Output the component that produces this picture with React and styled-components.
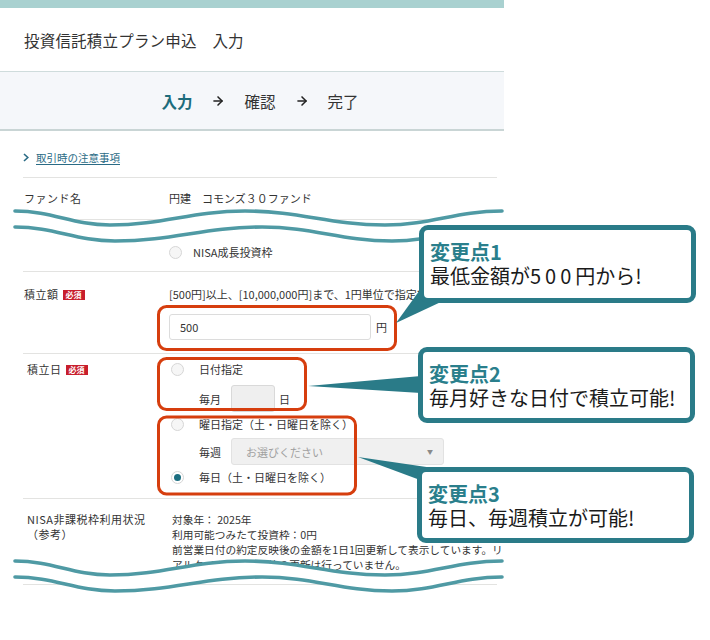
import React from "react";
import styled, { createGlobalStyle } from "styled-components";
import { ArrowRight } from "lucide-react";

const GlobalStyle = createGlobalStyle`
  * { box-sizing: border-box; }
  body { margin: 0; background: #fff; }
`;

const TEAL = "#2a7b88";
const RED = "#d63e0e";
const WAVE = "#4f9aa4";

// wave break shapes (page coordinates)
const XA = [15, 110, 245, 385, 502];
const XB = [15, 115, 262, 392, 502];
const pts = (xs, y) => xs.map((x, i) => [x, y + (i % 2 ? 14 : 0)]);
const segs = (p) => {
    let d = "";
    for (let i = 1; i < p.length; ++i) {
        const [x0, y0] = p[i - 1];
        const [x1, y1] = p[i];
        const k = (x1 - x0) * 0.4;
        d += ` C${x0 + k},${y0} ${x1 - k},${y1} ${x1},${y1}`;
    }
    return d;
};
const line = (p) => `M${p[0][0]},${p[0][1]}` + segs(p);
const band = (a, b) => {
    const rb = [...b].reverse();
    return line(a) + ` L${rb[0][0]},${rb[0][1]}` + segs(rb) + " Z";
};

const WaveBreak = ({ y }) => {
    const a = pts(XA, y);
    const b = pts(XB, y + 16);
    return (
        <g>
            <path d={band(a, b)} fill="#fff" />
            <path d={line(a)} fill="none" stroke={WAVE} strokeWidth="3.6" strokeLinecap="round" />
            <path d={line(b)} fill="none" stroke={WAVE} strokeWidth="3.6" strokeLinecap="round" />
        </g>
    );
};

const Radio = ({ checked, compact, children }) => (
    <RadioOption $compact={compact}>
        <RadioCircle $checked={checked} />
        <span>{children}</span>
    </RadioOption>
);

const App = () => {
    return (
        <>
            <GlobalStyle />
            <Canvas>
                <Page>
                    <TopStrip />
                    <Header>投資信託積立プラン申込　入力</Header>
                    <Steps>
                        <Step $active>入力</Step>
                        <ArrowRight size={14} strokeWidth={2.6} color="#222" />
                        <Step>確認</Step>
                        <ArrowRight size={14} strokeWidth={2.6} color="#222" />
                        <Step>完了</Step>
                    </Steps>
                    <Content>
                        <LinkRow>
                            <svg width="6" height="9" viewBox="0 0 6 9">
                                <polyline points="1,1 4.8,4.5 1,8" fill="none" stroke="#2a6b85" strokeWidth="1.6" />
                            </svg>
                            <Link>取引時の注意事項</Link>
                        </LinkRow>

                        <Row $pad="13px 0 14px">
                            <Label>ファンド名</Label>
                            <Value>円建　コモンズ３０ファンド</Value>
                        </Row>

                        <Row $pad="22px 0 9px">
                            <Label $lh={20} />
                            <Value>
                                <RadioLine $h={20}><Radio compact>NISA成長投資枠</Radio></RadioLine>
                            </Value>
                        </Row>

                        <Row $pad="15px 0 13px">
                            <Label>積立額<Badge>必須</Badge></Label>
                            <Value>
                                <Helper>[500円]以上、[10,000,000円]まで、1円単位で指定できます。</Helper>
                                <InputLine>
                                    <TextInput>500</TextInput>
                                    <Unit>円</Unit>
                                </InputLine>
                            </Value>
                        </Row>

                        <Row $pad="8px 0 14px">
                            <Label $indent={4}>積立日<Badge>必須</Badge></Label>
                            <Value>
                                <RadioLine><Radio>日付指定</Radio></RadioLine>
                                <SubRow $mt={9}>
                                    <SubLabel>毎月</SubLabel>
                                    <DayBox />
                                    <Unit $ml={4}>日</Unit>
                                </SubRow>
                                <RadioLine $mt={5}><Radio>曜日指定（土・日曜日を除く）</Radio></RadioLine>
                                <SubRow $mt={7}>
                                    <SubLabel>毎週</SubLabel>
                                    <Select>
                                        <span>お選びください</span>
                                        <Caret>▼</Caret>
                                    </Select>
                                </SubRow>
                                <RadioLine $mt={5}><Radio checked>毎日（土・日曜日を除く）</Radio></RadioLine>
                            </Value>
                        </Row>

                        <Row $pad="13px 0 12px">
                            <Label $indent={4} $lh={15}>NISA非課税枠利用状況<br />（参考）</Label>
                            <Notes>
                                対象年： 2025年<br />
                                利用可能つみたて投資枠：0円<br />
                                前営業日付の約定反映後の金額を1日1回更新して表示しています。リ<br />
                                アルタイムで非課税枠の更新は行っていません。
                            </Notes>
                        </Row>

                        <Row $pad="0 0 40px" />
                    </Content>
                </Page>

                <Overlay viewBox="0 0 710 640">
                    <WaveBreak y={211} />
                    <WaveBreak y={561} />
                    <rect x="158.5" y="306.5" width="237" height="43" rx="8" fill="none" stroke={RED} strokeWidth="3" />
                    <rect x="158.5" y="358.5" width="147" height="51" rx="8" fill="none" stroke={RED} strokeWidth="3" />
                    <rect x="158.5" y="417" width="197" height="77" rx="8" fill="none" stroke={RED} strokeWidth="3" />
                    <polygon points="396,323 422,287 443,301" fill={TEAL} />
                    <polygon points="308,386 421,376 421,393" fill={TEAL} />
                    <polygon points="358,457 447,470 420,480" fill={TEAL} />
                </Overlay>

                <Callout $x={419} $y={225} $h={78}>
                    <CalloutTitle>変更点1</CalloutTitle>
                    <CalloutText>最低金額が<Wide>500</Wide>円から!</CalloutText>
                </Callout>
                <Callout $x={418} $y={347} $h={76}>
                    <CalloutTitle>変更点2</CalloutTitle>
                    <CalloutText>毎月好きな日付で積立可能!</CalloutText>
                </Callout>
                <Callout $x={417} $y={467} $h={76}>
                    <CalloutTitle>変更点3</CalloutTitle>
                    <CalloutText>毎日、毎週積立が可能!</CalloutText>
                </Callout>
            </Canvas>
        </>
    );
};

const Canvas = styled.div`
    position: relative;
    width: 710px;
    height: 640px;
    overflow: hidden;
    background: #fff;
    font-family: "Noto Sans CJK JP", "Noto Sans", sans-serif;
    color: #333;
`
const Page = styled.div`
    width: 504px;
    overflow: hidden;
`
const TopStrip = styled.div`
    height: 8px;
    background: #a9d1d0;
`
const Header = styled.header`
    height: 64px;
    display: flex;
    align-items: center;
    padding-left: 24px;
    font-size: 15.5px;
    letter-spacing: 0.2px;
    color: #333;
    border-bottom: 1px solid #cfdcdc;
`
const Steps = styled.nav`
    height: 59px;
    display: flex;
    align-items: center;
    justify-content: center;
    gap: 19px;
    padding-left: 16px;
    background: #f5f7fa;
    border-bottom: 2px solid #c9d5d5;
`
const Step = styled.span`
    font-size: 15.5px;
    color: ${p => p.$active ? "#1d6c7c" : "#333"};
    font-weight: ${p => p.$active ? 700 : 400};
`
const Content = styled.div`
    padding: 0 7px 0 23px;
`
const LinkRow = styled.div`
    height: 46px;
    display: flex;
    align-items: center;
    gap: 7px;
    padding-top: 6px;
`
const Link = styled.a`
    font-size: 10.5px;
    color: #2a6b85;
    text-decoration: underline;
    text-underline-offset: 2px;
`
const Row = styled.div`
    display: grid;
    grid-template-columns: 146px 1fr;
    padding: ${p => p.$pad};
    border-top: 1px solid #e3e3e1;
`
const Label = styled.div`
    padding-left: ${p => p.$indent ?? 1}px;
    font-size: 11px;
    line-height: ${p => p.$lh ?? 14}px;
    letter-spacing: 0.5px;
    color: #333;
    white-space: nowrap;
`
const Badge = styled.span`
    display: inline-block;
    margin-left: 4px;
    padding: 0 3px;
    vertical-align: 1px;
    background: #c81e2c;
    color: #fff;
    font-size: 8px;
    line-height: 10px;
    font-weight: 700;
    letter-spacing: 0;
`
const Value = styled.div`
    font-size: 11px;
    line-height: 14px;
    color: #333;
`
const Helper = styled.div`
    white-space: nowrap;
`
const InputLine = styled.div`
    display: flex;
    align-items: center;
    margin-top: 13px;
`
const TextInput = styled.div`
    width: 202px;
    height: 26px;
    display: flex;
    align-items: center;
    padding-left: 10px;
    border: 1px solid #dcdcdc;
    border-radius: 3px;
    background: #fff;
    font-size: 11px;
`
const Unit = styled.span`
    margin-left: ${p => p.$ml ?? 5}px;
    font-size: 11px;
`
const RadioLine = styled.div`
    height: ${p => p.$h ?? 14}px;
    margin-top: ${p => p.$mt ?? 0}px;
    display: flex;
    align-items: center;
`
const RadioOption = styled.label`
    display: flex;
    align-items: center;
    gap: ${p => p.$compact ? 11 : 15}px;
    padding-left: ${p => p.$compact ? 0 : 2}px;
    white-space: nowrap;
`
const RadioCircle = styled.span`
    width: 13px;
    height: 13px;
    border-radius: 50%;
    border: 1px solid #d6d6d6;
    background: ${p => p.$checked ? "#fff" : "#f6f6f6"};
    display: flex;
    align-items: center;
    justify-content: center;
    &::after {
        content: "";
        width: 7px;
        height: 7px;
        border-radius: 50%;
        background: #1c6e80;
        display: ${p => p.$checked ? "block" : "none"};
    }
`
const SubRow = styled.div`
    display: flex;
    align-items: center;
    margin-top: ${p => p.$mt}px;
    padding-left: 30px;
`
const SubLabel = styled.span`
    width: 32px;
    font-size: 11px;
`
const DayBox = styled.div`
    width: 44px;
    height: 27px;
    border: 1px solid #d9d9d9;
    border-radius: 3px;
    background: #efefef;
`
const Select = styled.div`
    width: 213px;
    height: 27px;
    display: flex;
    align-items: center;
    justify-content: space-between;
    padding: 0 10px 0 14px;
    border: 1px solid #e2e2e2;
    border-radius: 3px;
    background: #f0f0f0;
    color: #a0a0a0;
    font-size: 11px;
`
const Caret = styled.span`
    font-size: 6px;
    color: #8a8a8a;
`
const Notes = styled.div`
    padding-left: 3px;
    font-size: 10.7px;
    line-height: 15px;
    color: #333;
    white-space: nowrap;
`
const Overlay = styled.svg`
    position: absolute;
    top: 0;
    left: 0;
    width: 710px;
    height: 640px;
    pointer-events: none;
    z-index: 1;
`
const Callout = styled.div`
    position: absolute;
    left: ${p => p.$x}px;
    top: ${p => p.$y}px;
    width: 277px;
    height: ${p => p.$h}px;
    padding: 10px 0 0 6px;
    border: 5px solid ${TEAL};
    border-radius: 9px;
    background: #fff;
    font-size: 20px;
    line-height: 24px;
    z-index: 2;
`
const CalloutTitle = styled.div`
    color: #2a7f8c;
    font-weight: 700;
`
const CalloutText = styled.div`
    color: #1a1a1a;
    font-weight: 400;
    white-space: nowrap;
`
const Wide = styled.span`
    letter-spacing: 4px;
`

export default App;
